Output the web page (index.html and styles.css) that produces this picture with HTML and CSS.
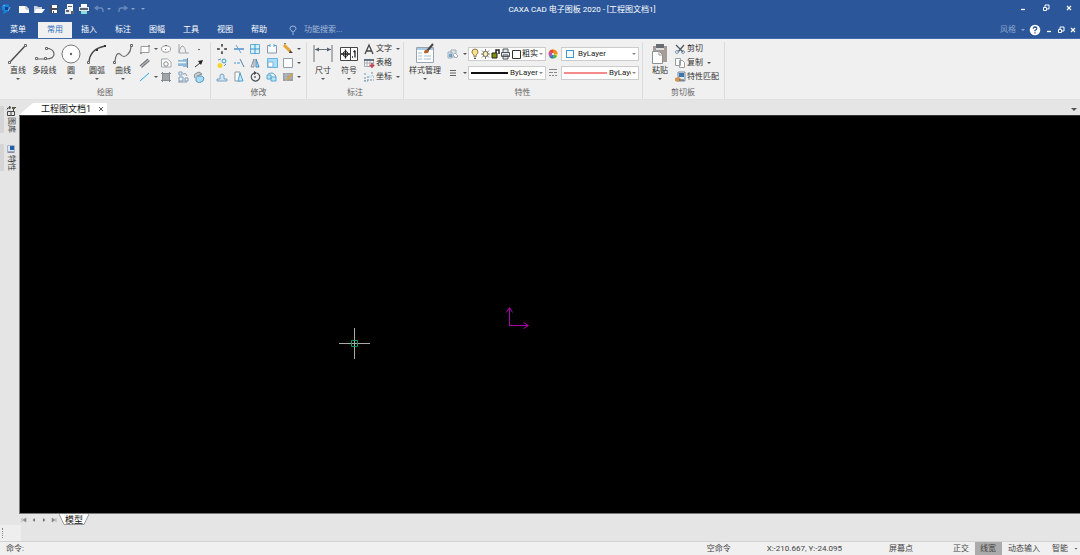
FILE: index.html
```html
<!DOCTYPE html>
<html lang="zh-CN">
<head>
<meta charset="utf-8">
<title>CAXA CAD 电子图板 2020</title>
<link rel="stylesheet" href="styles.css">
</head>
<body>
<div class="app">
<header class="titlebar">
  <div class="quick">
    <svg class="logo" viewBox="0 0 12 12"><path d="M2 3Q5 0 9 2L8 8Q5 11 3 11L4 8Q1 7 2 3Z" fill="#1685e0"/><path d="M5 4h3v3H5z" fill="#103f85"/><path d="M3 3l2-1M8 8l2-4" stroke="#54bdf5"/></svg>
    <button class="ib" aria-label="新建"><svg viewBox="0 0 12 12"><path d="M1 3h7l3 3v4H1z" fill="#fff"/><path d="M8 3v3h3" fill="none" stroke="#9ab"/></svg></button>
    <button class="ib" aria-label="打开"><svg viewBox="0 0 12 12"><path d="M1 9V3h3l1 1h4v2" fill="#c8d0dc"/><path d="M1 10l2-4h9l-3 4z" fill="#fff"/></svg></button>
    <button class="ib" aria-label="保存"><svg viewBox="0 0 12 12"><path d="M2 2h8v8H2z" fill="#434b5a"/><path d="M4 2h5v3H4zM4 7h5v3H4z" fill="#fff"/><path d="M5 8h1v2H5z" fill="#434b5a"/></svg></button>
    <button class="ib" aria-label="另存"><svg viewBox="0 0 12 12"><path d="M4 1h6v7H4z" fill="#fff"/><path d="M2 6h6v5H2z" fill="#e4e7ec"/><path d="M3 7h3v2H3zM8 8h3v3H8zM5 3h4v1H5z" fill="#596372"/></svg></button>
    <button class="ib" aria-label="打印"><svg viewBox="0 0 12 12"><path d="M3 1h6v3H3z" fill="#fff"/><path d="M1 4h10v4H1z" fill="#e2e5ea"/><path d="M2 5h8v2H2z" fill="#5c6570"/><path d="M3 8h6v3H3z" fill="#8be0df"/></svg></button>
    <button class="ib dim" aria-label="撤销"><svg viewBox="0 0 12 12"><path d="M5 3L2 5l3 2M2 5h6q2 0 2 3v1" fill="none" stroke="#6789bd" stroke-width="1.4"/></svg></button>
    <i class="arr blue"></i>
    <button class="ib dim" aria-label="重做"><svg viewBox="0 0 12 12"><path d="M7 3l3 2-3 2M10 5H4Q2 5 2 8v1" fill="none" stroke="#6789bd" stroke-width="1.4"/></svg></button>
    <i class="arr blue"></i><i class="arr blue more"></i>
  </div>
  <h1 class="title">CAXA CAD 电子图板 2020 - [工程图文档1]</h1>
  <div class="wincontrols">
    <button class="wb" aria-label="最小化"><svg viewBox="0 0 8 8"><path d="M2 5.500h4" stroke="#fff" stroke-width="1.300"/></svg></button>
    <button class="wb" aria-label="还原"><svg viewBox="0 0 8 8"><path d="M3 3V1h4v4H5M1.500 3.500h3v3h-3z" fill="none" stroke="#fff"/></svg></button>
    <button class="wb" aria-label="关闭"><svg viewBox="0 0 8 8"><path d="M2 2l4 4M6 2L2 6" stroke="#fff" stroke-width="1.200"/></svg></button>
  </div>
</header>
<nav class="menubar">
  <button class="tab file">菜单</button>
  <button class="tab active">常用</button>
  <button class="tab">插入</button>
  <button class="tab">标注</button>
  <button class="tab">图幅</button>
  <button class="tab">工具</button>
  <button class="tab">视图</button>
  <button class="tab">帮助</button>
  <label class="search"><svg viewBox="0 0 8 10"><path d="M3 7L3 6Q1 5 1 3.500Q1 1 4 1Q7 1 7 3.500Q7 5 5 6V7ZM3 9h2" fill="none" stroke="#b9c9e2" stroke-width=".8"/></svg><input type="text" placeholder="功能搜索..." aria-label="功能搜索"></label>
  <div class="menuright">
    <button class="style">风格<i class="arr blue"></i></button>
    <button class="help" aria-label="帮助信息"><svg viewBox="0 0 12 12"><circle cx="6" cy="6" r="5.300" fill="#fff"/><path d="M4.200 4.800Q4.300 3 6 3Q8 3.100 7.700 4.900Q7.500 5.500 6 6.500v.8M6 8.200v1.300" fill="none" stroke="#2b579a" stroke-width="1.300"/></svg></button>
    <button class="wb" aria-label="文档最小化"><svg viewBox="0 0 8 8"><path d="M2 5.500h4" stroke="#fff" stroke-width="1.300"/></svg></button>
    <button class="wb" aria-label="文档还原"><svg viewBox="0 0 8 8"><path d="M3 3V1h4v4H5M1.500 3.500h3v3h-3z" fill="none" stroke="#fff"/></svg></button>
    <button class="wb" aria-label="文档关闭"><svg viewBox="0 0 8 8"><path d="M2 2l4 4M6 2L2 6" stroke="#fff" stroke-width="1.200"/></svg></button>
  </div>
</nav>
<section class="ribbon">
  <div class="group draw">
    <div class="tools">
      <button class="big"><svg viewBox="0 0 22 22"><path d="M3 19L18 3" stroke="#444" stroke-width="1.300"/><path d="M1.500 18.500h2v2h-2zM17.500 1.500h2v2h-2z" fill="#fff" stroke="#666"/></svg>直线<i class="arr"></i></button>
      <button class="big"><svg viewBox="0 0 22 22"><path d="M3 16h8M12 5q8 1 8 6t-8 5" fill="none" stroke="#666" stroke-width="1.200"/><path d="M1.500 14.500h2v2h-2zM10.500 14.500h2v2h-2zM11.500 4.500h2v2h-2z" fill="#fff" stroke="#666"/></svg>多段线</button>
      <button class="big"><svg viewBox="0 0 22 22"><circle cx="11" cy="11" r="9" fill="#fff" stroke="#777"/><circle cx="11" cy="11" r="1.200" fill="#666"/></svg>圆<i class="arr"></i></button>
      <button class="big"><svg viewBox="0 0 22 22"><path d="M3 19Q4 6 19 3" fill="none" stroke="#444" stroke-width="1.300"/><path d="M1.500 18.500h2v2h-2z" fill="#fff" stroke="#666"/><path d="M10 6h2v2h-2zM18 2h2v2h-2z" fill="#333"/></svg>圆弧<i class="arr"></i></button>
      <button class="big"><svg viewBox="0 0 22 22"><path d="M3 18Q4 9 8 11Q12 16 16 11Q19 8 19 3" fill="none" stroke="#666" stroke-width="1.200"/><path d="M1.500 18.500h2v2h-2zM18.500 1.500h2v2h-2z" fill="#fff" stroke="#666"/></svg>曲线<i class="arr"></i></button>
      <div class="minis minis-draw">
        <button aria-label="矩形"><svg viewBox="0 0 12 12"><path d="M2 3.500h8v6H2z" fill="#fff" stroke="#999"/><path d="M1 9h2v2H1zM9 2h2v2H9z" fill="#999"/></svg><i class="arr"></i></button>
        <button aria-label="椭圆"><svg viewBox="0 0 12 12"><ellipse cx="6" cy="6" rx="4.500" ry="3.200" fill="#fff" stroke="#999"/><path d="M5 2h2v1H5zM5 6h1v1H5z" fill="#777"/></svg></button>
        <button aria-label="公式曲线"><svg viewBox="0 0 12 12"><path d="M2 1v9h10M2 9Q4 2 6 3T9 10" fill="none" stroke="#a0a6ad"/></svg></button>
        <button aria-label="点"><svg viewBox="0 0 12 12"><path d="M5 6h2v1H5z" fill="#666"/></svg></button>
        <button aria-label="平行线"><svg viewBox="0 0 12 12"><path d="M1 9l8-7M2.500 10.500l8-7" stroke="#74787e" stroke-width="1.200"/><path d="M2 9.500l8-7" stroke="#a9acb0"/></svg></button>
        <button aria-label="孔"><svg viewBox="0 0 12 12"><path d="M1.500 2h6L11 5v5H1.500z" fill="#fff" stroke="#a2a7ad"/><circle cx="6" cy="7" r="2.200" fill="none" stroke="#888"/></svg></button>
        <button aria-label="轴"><svg viewBox="0 0 12 12"><path d="M1 3h5V2h5v8H6V9H1z" fill="#8fb8d9"/><path d="M1 5.500h8" stroke="#edf8ff" stroke-width="1.500"/><path d="M10.500 1v10" stroke="#6d86a0"/></svg></button>
        <button aria-label="箭头"><svg viewBox="0 0 12 12"><path d="M2 10l5-4" stroke="#333"/><path d="M10 3L8 8L5 4z" fill="#222"/></svg></button>
        <button aria-label="中心线"><svg viewBox="0 0 12 12"><path d="M1 10l9-8" stroke="#24a9e9"/></svg><i class="arr"></i></button>
        <button aria-label="填充"><svg viewBox="0 0 12 12"><path d="M2 2h8v8H2z" fill="#a0a5aa"/><path d="M1 2.500h10M1 9.500h10M2.500 1v10M9.500 1v10" stroke="#868b91"/></svg></button>
        <button aria-label="图块"><svg viewBox="0 0 12 12"><path d="M2 1h3v3H2zM2 6h4v4H2zM8 7h3v3H8z" fill="#e9f6ff" stroke="#7c9bb8"/><path d="M6 3q3-2 4 2M1 11h9" fill="none" stroke="#8898a6"/></svg></button>
        <button aria-label="局部放大"><svg viewBox="0 0 12 12"><path d="M3 5h6l2 2-1 3-4 2-3-2z" fill="#a5ddff" stroke="#5f94b9"/><path d="M2 7Q0 3 4 2l2-1 3 2-5 2" fill="#cbd2d8" stroke="#7f8990"/></svg></button>
      </div>
    </div>
    <h2>绘图</h2>
  </div>
  <div class="group edit">
    <div class="tools">
      <div class="minis minis-edit">
        <button aria-label="平移"><svg viewBox="0 0 12 12"><path d="M6 1v3M6 8v3M1 6h3M8 6h3M5 2h2M5 10h2M2 5v2M10 5v2" stroke="#555" stroke-width="1.300"/></svg></button>
        <button aria-label="修剪"><svg viewBox="0 0 12 12"><path d="M1 6h10" stroke="#4e91ca" stroke-width="1.500"/><path d="M3 2l5 8" stroke="#63a7d9"/></svg></button>
        <button aria-label="阵列"><svg viewBox="0 0 12 12"><path d="M1.500 1.500h9v9h-9z" fill="#d6f1ff" stroke="#6aaed6"/><path d="M6 1v10M1 6h10" stroke="#4195c8"/></svg></button>
        <button aria-label="打断"><svg viewBox="0 0 12 12"><path d="M4 2.500H1.500v7.500h9V2.500H8" fill="#f6fbff" stroke="#8797a6"/><path d="M4 1v3M8 1v3" stroke="#51a7d9"/></svg></button>
        <button aria-label="标注编辑"><svg viewBox="0 0 12 12"><path d="M2 2l6 6" stroke="#e8a431" stroke-width="3"/><path d="M2 1l2-1" stroke="#6b5634"/><path d="M8 7l3 3H7z" fill="#5a3a1b"/></svg><i class="arr"></i></button>
        <button aria-label="平移复制"><svg viewBox="0 0 12 12"><circle cx="4" cy="8.500" r="2.500" fill="#f2d630"/><circle cx="8" cy="4" r="2" fill="#daf3ff" stroke="#429ac9"/><path d="M2 3l3-1M8 9l2-2" stroke="#6292b5"/></svg></button>
        <button aria-label="延伸"><svg viewBox="0 0 12 12"><path d="M1 6h2m1 0h3" stroke="#4499d2"/><path d="M7 2l4 8" stroke="#5680a3"/></svg></button>
        <button aria-label="镜像"><svg viewBox="0 0 12 12"><path d="M5 2v8H2z" fill="#e1e5e9" stroke="#8b9299"/><path d="M7 2v8h3z" fill="#ade0ff" stroke="#4789b6"/></svg></button>
        <button aria-label="缩放"><svg viewBox="0 0 12 12"><path d="M1.500 1.500h10v9h-10z" fill="#a9def9" stroke="#65b5df"/><path d="M2 5h5v5H2z" fill="#fff" stroke="#7fb0ce"/></svg></button>
        <button aria-label="边框"><svg viewBox="0 0 12 12"><path d="M1.500 1.500h9v9h-9z" fill="#fff" stroke="#909eaa"/></svg><i class="arr"></i></button>
        <button aria-label="等距"><svg viewBox="0 0 12 12"><path d="M1 10V8h3V5q0-2 2-2t2 2v3h3v2z" fill="#cfe6f5" stroke="#7ba3bf"/></svg></button>
        <button aria-label="拉伸"><svg viewBox="0 0 12 12"><path d="M2 1h5v9H2z" fill="#fff" stroke="#8d979f"/><path d="M7 2l3 8H5z" fill="#c2e9ff" stroke="#50a4d2"/></svg></button>
        <button aria-label="旋转"><svg viewBox="0 0 12 12"><path d="M5 2a4.200 4.200 0 1 0 3 0" fill="none" stroke="#454b52" stroke-width="1.100"/><path d="M5 0v4l3-2z" fill="#444"/><circle cx="6" cy="6" r="1" fill="#666"/></svg></button>
        <button aria-label="分解"><svg viewBox="0 0 12 12"><path d="M1 4h4v4H1zM5 6h5v4H5z" fill="#b8e6ff" stroke="#5ca6d0"/><path d="M2 3q6-3 8 3" fill="none" stroke="#5ca6d0"/></svg></button>
        <button aria-label="属性编辑"><svg viewBox="0 0 12 12"><path d="M1 2h10v8H1z" fill="#9ba2a7"/><path d="M2 4h8M2 7h8M4 2v8" stroke="#b4babd"/><path d="M5 9l5-6" stroke="#dfa13c" stroke-width="1.500"/></svg><i class="arr"></i></button>
      </div>
    </div>
    <h2>修改</h2>
  </div>
  <div class="group note">
    <div class="tools">
      <button class="big"><svg viewBox="0 0 22 22"><path d="M2 2v17M20 2v17M3 6.500h16" fill="none" stroke="#6a727b"/><path d="M3 6.500l4-2v4zM19 6.500l-4-2v4z" fill="#56606b"/></svg>尺寸<i class="arr"></i></button>
      <button class="big"><svg viewBox="0 0 22 22"><path d="M2.500 4.500h17v13h-17z" fill="#fff" stroke="#444"/><path d="M12.500 5v12" stroke="#444"/><circle cx="7.500" cy="11" r="2.500" fill="none" stroke="#222"/><path d="M3 11h9M7.500 6.500v9M17 7.500v7M15.500 9L17 7.500M14 14h1" fill="none" stroke="#222" stroke-width="1.300"/></svg>符号<i class="arr"></i></button>
      <div class="rows">
        <button><svg viewBox="0 0 12 12"><path d="M2 11L6 2L10 11M3.500 8h5" fill="none" stroke="#444" stroke-width="1.300"/></svg>文字<i class="arr"></i></button>
        <button><svg viewBox="0 0 12 12"><path d="M1.500 2.500h9v7h-9zM1 6h10M4 3v6M7 3v6" fill="#fff" stroke="#a3abb2"/><path d="M1 2h10v2H1z" fill="#65717d"/><path d="M9 6v5M6.500 8.500h5" stroke="#d03b43" stroke-width="1.500"/></svg>表格</button>
        <button><svg viewBox="0 0 12 12"><path d="M2 2v2M2 6v4M5 5v5M9 1v4M1 10h4M7 6h4M7 9h4" stroke="#6b91ac" stroke-dasharray="2 1"/><path d="M6 4h3v3H6z" fill="#d0e9f7"/></svg>坐标<i class="arr"></i></button>
      </div>
    </div>
    <h2>标注</h2>
  </div>
  <div class="group props">
    <div class="tools">
      <button class="big wide"><svg viewBox="0 0 22 22"><path d="M2.500 4.500h17v15h-17z" fill="#fff" stroke="#98a4b0"/><path d="M3 5h16v2H3z" fill="#a9c8e4"/><path d="M4 10h4M4 13h4M4 16h4M10 13h7M10 16h7" stroke="#a8bccd"/><path d="M19 1l-6 7" stroke="#444" stroke-width="2"/><path d="M14 7Q10 6 10 10q3 1 5-1z" fill="#b5652c"/></svg>样式管理<i class="arr"></i></button>
      <div class="proprows">
        <div class="proprow">
          <button class="pick" aria-label="图层"><svg viewBox="0 0 12 12"><path d="M1 4h4v6H1zM4 2h5v7H4z" fill="#dce4eb" stroke="#a3afbb"/><path d="M8 5l3 3-2 2-3-3z" fill="#fff" stroke="#a3afbb"/><path d="M2 6h3v3H2z" fill="#6aa4cf"/></svg><i class="arr"></i></button>
          <span class="combo">
            <svg class="layers" viewBox="0 0 50 12"><path d="M3 9V7Q1 6 1 4Q1 1 4 1T7 4Q7 6 5 7v2z" fill="#ffe18b" stroke="#8a7c54"/><path d="M3 10h2v1H3z" fill="#555"/><circle cx="14.500" cy="6" r="2.500" fill="#ffeeb0" stroke="#666159"/><path d="M14.500 1v2M14.500 9v2M10 6h2M17 6h2M11 2.500l1.500 1.500M16.500 8l1.500 1.500M18 2.500L16.500 4M12.500 8L11 9.500" stroke="#5b584f" stroke-width=".8"/><path d="M21 5h5v5h-5z" fill="#829200" stroke="#222"/><path d="M25 5V2h3v4" fill="none" stroke="#222" stroke-width="1.500"/><path d="M32 4V1h5v3M30.500 4.500h8v4h-8zM32 7h5v4h-5z" fill="#e3e7ea" stroke="#4f555b"/><path d="M41.500 2.500h8v8h-8z" fill="#fff" stroke="#333"/></svg>
            <select class="clip" aria-label="当前图层"><option>粗实线层</option></select><i class="arr"></i>
          </span>
          <svg class="mark" viewBox="0 0 12 12"><circle cx="6" cy="6" r="4.500" fill="#fbca31"/><path d="M6 6V1.500A4.500 4.500 0 0 1 10.500 6z" fill="#ef8a2c"/><path d="M6 6L2 3.500A4.500 4.500 0 0 1 6 1.500z" fill="#e64545"/><path d="M6 6L2 3.500Q1 6 2.500 9z" fill="#b54cc5"/><path d="M6 6L2.500 9Q4 11 6 10.500z" fill="#3278d6"/><path d="M6 6v4.500Q9 10.500 10 8z" fill="#4bb456"/><circle cx="6" cy="6" r="1" fill="#fff"/></svg>
          <span class="combo"><i class="swatch"></i><select aria-label="颜色"><option>ByLayer</option></select><i class="arr"></i></span>
        </div>
        <div class="proprow">
          <button class="pick" aria-label="线宽设置"><svg viewBox="0 0 12 12"><path d="M3 3.500h6M3 6h6M3 8.500h6" stroke="#666"/></svg><i class="arr"></i></button>
          <span class="combo"><i class="line thick"></i><select aria-label="线宽"><option>ByLayer</option></select><i class="arr"></i></span>
          <svg class="mark" viewBox="0 0 12 12"><path d="M2 2.500h8M2 5.500h4M7 5.500h3M2 8.500h2M5 8.500h2M8 8.500h2" stroke="#888"/></svg>
          <span class="combo"><i class="line red"></i><select class="clip" aria-label="线型"><option>ByLayer</option></select><i class="arr"></i></span>
        </div>
      </div>
    </div>
    <h2>特性</h2>
  </div>
  <div class="group clipb">
    <div class="tools">
      <button class="big"><svg viewBox="0 0 22 22"><path d="M4 3h14v16H4z" fill="#a59d96"/><path d="M7 1h8v4H7z" fill="#676c72"/><path d="M7 5h8v2H7z" fill="#ddd"/><path d="M3.500 8.500h7l3 3v9h-10z" fill="#fff" stroke="#8b9094"/><path d="M10 8v4h4" fill="none" stroke="#999"/></svg>粘贴<i class="arr"></i></button>
      <div class="rows">
        <button><svg viewBox="0 0 12 12"><path d="M2 2l7 7M10 2L4 9" stroke="#555b62" stroke-width="1.300"/><circle cx="3" cy="9" r="1.500" fill="none" stroke="#7f9cb6"/><circle cx="9" cy="9" r="1.500" fill="none" stroke="#7f9cb6"/></svg>剪切</button>
        <button><svg viewBox="0 0 12 12"><path d="M1.500 1.500h5v7h-5zM5.500 3.500h3l2 2v5h-5z" fill="#fff" stroke="#9a9ea2"/></svg>复制<i class="arr"></i></button>
        <button><svg viewBox="0 0 12 12"><path d="M4 1h7v9H4z" fill="#dce8f2" stroke="#77879a"/><path d="M5 2h5v4H5z" fill="#3e77ac"/><path d="M1 7l4-1 2 2-3 3-3-1z" fill="#d49557"/><path d="M5 9h5" stroke="#555"/></svg>特性匹配</button>
      </div>
    </div>
    <h2>剪切板</h2>
  </div>
</section>
<main class="work">
  <aside class="side">
    <button class="sidetab"><svg viewBox="0 0 10 10"><path d="M1 3.500Q1 1.500 4 1.500M3 0l2 1.500L3 3M1.500 5.500h7v4h-7zM5 6v3M7.500 1v4M6 1.500h4" fill="none" stroke="#444"/><path d="M6 1h3v2H6z" fill="#59623b"/></svg><span>图库</span></button>
    <button class="sidetab"><svg viewBox="0 0 10 10"><path d="M1.500 1.500h7v7h-7z" fill="#d9e9f6" stroke="#a8b5c0"/><path d="M4 2h4v4H4z" fill="#225eaa"/><path d="M2 8h6" stroke="#668"/></svg><span>特性</span></button>
  </aside>
  <div class="docs">
    <div class="doctabs">
      <div class="doctab"><span>工程图文档1</span><button aria-label="关闭文档"><svg viewBox="0 0 8 8"><path d="M2 2l4 4M6 2L2 6" stroke="#555"/></svg></button></div>
      <button class="doclist" aria-label="文档列表"><i class="arr large"></i></button>
    </div>
    <div class="canvas">
      <svg class="cross" viewBox="0 0 31 31"><path d="M0 15.500h31M15.500 0v31" stroke="#aaa"/><path d="M12.500 12.500h6v6h-6z" fill="none" stroke="#15995f"/></svg>
      <svg class="axes" viewBox="0 0 24 24"><path d="M3.500 21V3M3.500 20.500H22M.5 7.500l3-5 3 5M17.500 17.500l5 3-5 3" fill="none" stroke="#a900a9"/></svg>
    </div>
    <div class="sheets">
      <button aria-label="首页"><svg viewBox="0 0 6 6"><path d="M1 1v4M5 1v4L2 3z" fill="#888" stroke="#888" stroke-width=".6"/></svg></button>
      <button aria-label="上一页"><svg viewBox="0 0 6 6"><path d="M4 1v4L1.500 3z" fill="#777"/></svg></button>
      <button aria-label="下一页"><svg viewBox="0 0 6 6"><path d="M2 1v4l2.500-2z" fill="#777"/></svg></button>
      <button aria-label="末页"><svg viewBox="0 0 6 6"><path d="M5 1v4M1 1v4l3-2z" fill="#888" stroke="#888" stroke-width=".6"/></svg></button>
      <button class="sheet"><svg viewBox="0 0 30 11" preserveAspectRatio="none"><path d="M0 0L5 10.500H25L30 0" fill="#fff" stroke="#999"/></svg><span>模型</span></button>
    </div>
  </div>
</main>
<div class="dock"><div class="grip"><i></i></div></div>
<footer class="status">
  <label for="cmd">命令:</label><input id="cmd" type="text">
  <span class="s-cmd">空命令</span>
  <span class="s-xy">X:-210.667, Y:-24.095</span>
  <span class="s-pt">屏幕点</span>
  <button>正交</button><button class="on">线宽</button><button class="dyn">动态输入</button><button class="smart">智能<i class="arr"></i></button>
</footer>
</div>
</body>
</html>
```
FILE: styles.css
```css
* { box-sizing: border-box; }
html, body { height: 100%; }
body {
  margin: 0;
  font: 8px/10px Roboto, "Noto Sans CJK SC", sans-serif;
  color: #333;
  background: #e5e5e5;
}
button, input, select { font: inherit; color: inherit; border: 0; background: none; padding: 0; margin: 0; }
button { white-space: nowrap; }
svg { display: block; flex: none; }
h1, h2 { margin: 0; font: inherit; }
.app { display: flex; flex-direction: column; min-height: 100%; }

.arr { display: inline-block; flex: none; width: 4px; height: 2px; background: #555; clip-path: polygon(0 0, 100% 0, 50% 100%); }
.arr.blue { background: #8ba4cc; }
.arr.large { width: 6px; height: 3px; }

.titlebar { display: flex; align-items: center; height: 20px; padding-bottom: 2px; background: #2b579a; color: #fff; }
.quick { display: flex; align-items: center; }
.quick svg { width: 12px; height: 12px; }
.quick .logo { margin-right: 4px; }
.ib { width: 15px; display: flex; justify-content: center; }
.quick .arr { margin: 0 4px 0 1px; }
.quick .more { margin: 0 0 0 2px; }
.title { flex: 1; text-align: center; padding-top: 2px; }
.wincontrols { display: flex; gap: 15px; padding: 0 7px 2px 0; align-items: center; }
.wb svg { width: 8px; height: 8px; }

.menubar { display: flex; height: 19px; padding-left: 2px; background: #2b579a; color: #fff; border-bottom: 1px solid #4169ad; align-items: stretch; }
.tab { padding: 0 9px 1px; margin-top: 2px; }
.tab.file { padding: 0 12px 1px 8px; }
.tab.active { background: #f0f0f0; color: #2b6cc0; }
.search { display: flex; align-items: center; gap: 7px; margin: 2px 0 0 13px; color: #b9c9e2; }
.search svg { width: 8px; height: 10px; }
.search input { width: 80px; outline: 0; }
.search input::placeholder { color: #a5b9d9; opacity: 1; }
.menuright { display: flex; align-items: center; margin: 2px 3px 0 auto; }
.style { display: flex; align-items: center; gap: 5px; color: #8ba4cc; margin-right: 4px; }
.help svg { width: 12px; height: 12px; }
.menuright .wb { margin-left: 4px; }

.ribbon { display: flex; background: #f0f0f0; border-bottom: 1px solid #e0e0e0; padding-top: 3px; }
.group { display: flex; flex-direction: column; padding: 0 5px; border-right: 1px solid #dcdcdc; }
.group h2 { text-align: center; color: #666; padding: 3px 0 1px; }
.tools { display: flex; height: 43px; align-items: flex-start; }
.big { display: flex; flex-direction: column; align-items: center; min-width: 26px; height: 40px; line-height: 10px; }
.big svg { width: 22px; height: 24px; }
.big .arr { margin-top: 2px; }
.draw .tools .big:nth-child(2) { min-width: 27px; }
.minis { display: grid; grid-auto-rows: 14px; }
.minis button { display: flex; align-items: center; gap: 3px; }
.minis svg, .rows svg { width: 12px; height: 12px; }
.minis-draw { grid-template-columns: 21px 17px 16px 12px; margin-left: 3px; }
.minis-edit { grid-template-columns: 17px 16px 17px 16px 19px; }
.rows { display: grid; grid-auto-rows: 14px; margin-left: 1px; }
.rows button { display: flex; align-items: center; gap: 1px; }
.rows .arr { margin-left: 3px; }
.note { padding: 0 3px; }
.props { padding: 0 3px 0 2px; }
.clipb { padding: 0 5px 0 4px; }
.wide { min-width: 38px; }
.proprows { display: grid; gap: 5px; padding: 5px 0 0 1px; }
.proprow { display: flex; align-items: center; }
.pick { display: flex; align-items: center; gap: 4px; margin: 0 1px 0 2px; }
.pick svg, .mark { width: 12px; height: 12px; }
.mark { margin: 0 2px 0 1px; }
.combo { display: flex; align-items: center; width: 78px; height: 14px; padding: 0 2px; background: #fff; border: 1px solid #ccc; }
.combo select { appearance: none; flex: 1; min-width: 0; height: 12px; color: #222; outline: 0; overflow: hidden; }
.combo .arr { margin-left: 1px; background: #888; }
.layers { width: 50px; height: 12px; margin-right: 1px; }
.swatch { width: 8px; height: 8px; border: 1px solid #3c96d8; margin: 0 4px 0 2px; }
.line { flex: none; width: 37px; height: 2px; margin-right: 2px; background: #111; }
.line.red { width: 43px; background: #f48a8a; }

.work { display: flex; flex: 1; min-height: 200px; }
.side { display: flex; flex-direction: column; gap: 11px; width: 19px; padding-top: 6px; }
.sidetab { display: flex; flex-direction: column; align-items: center; gap: 1px; border-left: 4px solid #d5d5d5; padding: 0 2px 0 1px; }
.sidetab svg { width: 10px; height: 10px; }
.sidetab span { writing-mode: vertical-rl; text-orientation: sideways; }
.docs { display: flex; flex-direction: column; flex: 1; min-width: 0; }
.doctabs { display: flex; justify-content: space-between; align-items: flex-end; height: 15px; padding-top: 3px; }
.doctab { display: flex; align-items: center; height: 12px; padding: 0 2px 0 22px; background: #fff; clip-path: polygon(0 100%, 14px 0, 100% 0, 100% 100%); font-size: 9px; color: #111; }
.doctab button { margin-left: 6px; }
.doctab svg { width: 8px; height: 8px; }
.doclist { padding: 0 3px 4px; display: flex; }
.canvas { position: relative; flex: 1; background: #000; border: 1px solid #777; border-width: 1px 0 1px 1px; border-top-color: #333; }
.cross, .axes { position: absolute; }
.cross { width: 31px; height: 31px; left: 319px; top: 212px; }
.axes { width: 24px; height: 24px; left: 486px; top: 189px; }
.sheets { display: flex; align-items: center; height: 11px; }
.sheets button { padding: 0 2px; }
.sheets button svg { width: 6px; height: 6px; }
.sheets .sheet { display: grid; place-items: center; padding: 0; font-size: 9px; color: #111; }
.sheets .sheet > * { grid-area: 1 / 1; }
.sheets .sheet svg { width: 30px; height: 11px; }

.dock { height: 17px; border-bottom: 1px solid #d2d2d2; }
.grip { width: 21px; height: 16px; background: #eee; padding: 3px 2px; }
.grip i { display: block; height: 10px; border-left: 1px dotted #888; }
.status { display: flex; align-items: stretch; height: 13px; line-height: 13px; padding-left: 6px; background: #f0f0f0; color: #444; }
.status input { flex: 1; min-width: 0; outline: 0; }
.s-cmd { margin-right: 36px; }
.s-xy { margin-right: 47px; }
.s-pt { margin-right: 35px; }
.status button { padding: 0 6px 0 5px; }
.status .on { background: #ababab; }
.status .dyn { padding: 0 7px 0 6px; }
.status .smart { display: flex; align-items: center; gap: 6px; padding: 0 2px 0 5px; }
```
